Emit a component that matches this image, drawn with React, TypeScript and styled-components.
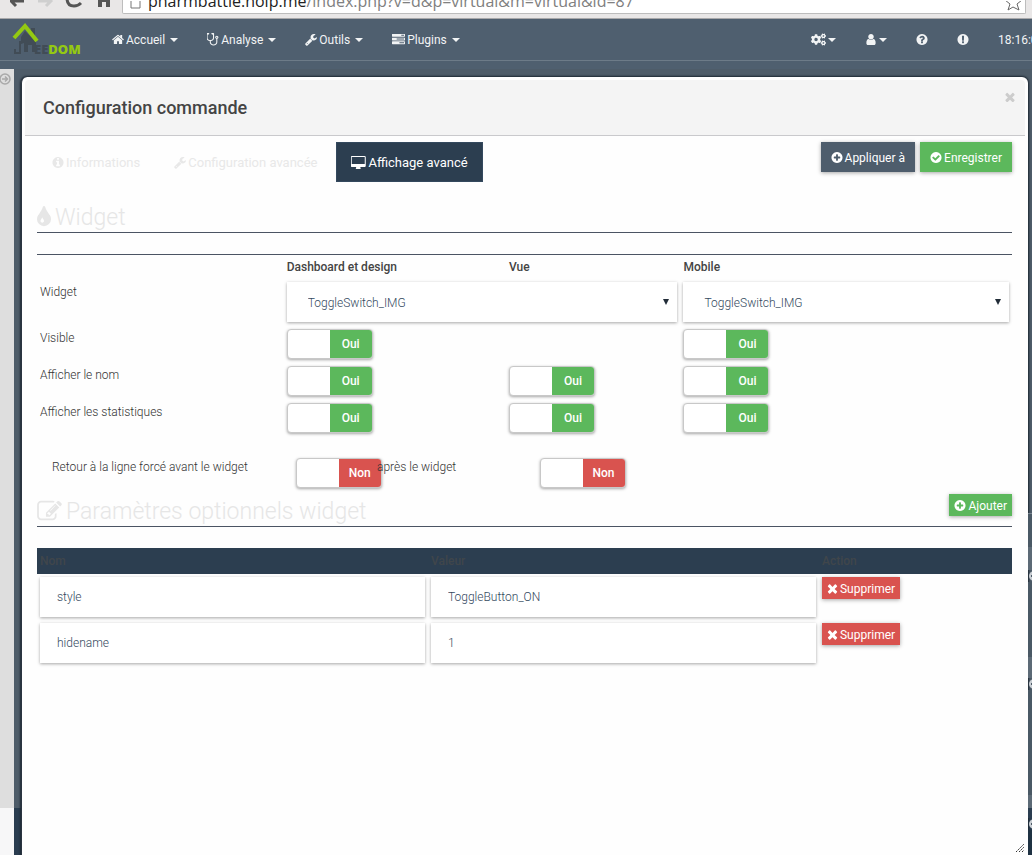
import React, { useState } from "react";
import styled, { createGlobalStyle } from "styled-components";
import { FaCogs } from "react-icons/fa";

const Global = createGlobalStyle`
  *, *::before, *::after { box-sizing: border-box; }
  body { margin: 0; font: 300 12px/20px Roboto, "Liberation Sans", sans-serif; color: #333; background: #f7f7f8; }
  button, input, select { font: inherit; color: inherit; margin: 0; }
`;

/* ---------- icons ---------- */
const DISC =
  "q0 209-103 385.5t-279.5 279.5-385.5 103-385.5-103-279.5-279.5-103-385.5 103-385.5 279.5-279.5 385.5-103 385.5 103 279.5 279.5 103 385.5z";
const ICONS = {
  home: "M1472 992v480q0 26-19 45t-45 19h-384v-384h-256v384h-384q-26 0-45-19t-19-45v-480q0-1 .5-3t.5-3l575-474 575 474q1 2 1 6zm223-69l-62 74q-8 9-21 11h-3q-13 0-21-7l-692-577-692 577q-12 8-24 7-13-2-21-11l-62-74q-8-10-7-23.5t11-21.5l719-599q32-26 76-26t76 26l244 204v-195q0-14 9-23t23-9h192q14 0 23 9t9 23v408l219 182q10 8 11 21.5t-7 23.5z",
  stethoscope:
    "M1344 640q0-26-19-45t-45-19-45 19-19 45 19 45 45 19 45-19 19-45zm128 0q0 62-35.5 111t-92.5 70v395q0 159-131.5 271.5t-316.5 112.5-316.5-112.5-131.5-271.5v-132q-164-20-274-128t-110-252v-512q0-26 19-45t45-19q6 0 16 2 17-30 47-48t65-18q53 0 90.5 37.5t37.5 90.5-37.5 90.5-90.5 37.5q-33 0-64-18v402q0 106 94 181t226 75 226-75 94-181v-402q-31 18-64 18-53 0-90.5-37.5t-37.5-90.5 37.5-90.5 90.5-37.5q35 0 65 18t47 48q10-2 16-2 26 0 45 19t19 45v512q0 144-110 252t-274 128v132q0 106 94 181t226 75 226-75 94-181v-395q-57-21-92.5-70t-35.5-111q0-80 56-136t136-56 136 56 56 136z",
  wrench:
    "M448 1472q0-26-19-45t-45-19-45 19-19 45 19 45 45 19 45-19 19-45zm644-420l-682 682q-37 37-90 37-52 0-91-37l-106-108q-38-36-38-90 0-53 38-91l681-681q39 98 114.5 173.5t173.5 114.5zm634-435q0 39-23 106-47 134-164.5 217.5t-258.5 83.5q-185 0-316.5-131.5t-131.5-316.5 131.5-316.5 316.5-131.5q58 0 121.5 16.5t107.5 46.5q16 11 16 28t-16 28l-293 169v224l193 107q5-3 79-48.5t135.5-81 70.5-35.5q15 0 23.5 10t8.5 25z",
  tasks:
    "M1024 1408h640v-128h-640v128zm-384-512h1024v-128h-1024v128zm640-512h384v-128h-384v128zm512 832v256q0 26-19 45t-45 19h-1664q-26 0-45-19t-19-45v-256q0-26 19-45t45-19h1664q26 0 45 19t19 45zm0-512v256q0 26-19 45t-45 19h-1664q-26 0-45-19t-19-45v-256q0-26 19-45t45-19h1664q26 0 45 19t19 45zm0-512v256q0 26-19 45t-45 19h-1664q-26 0-45-19t-19-45v-256q0-26 19-45t45-19h1664q26 0 45 19t19 45z",
  user: "M1536 1399q0 109-62.5 187t-150.5 78h-854q-88 0-150.5-78t-62.5-187q0-85 8.5-160.5t31.5-152 58.5-131 94-89 134.5-34.5q131 128 313 128t313-128q76 0 134.5 34.5t94 89 58.5 131 31.5 152 8.5 160.5zm-256-887q0 159-112.5 271.5t-271.5 112.5-271.5-112.5-112.5-271.5 112.5-271.5 271.5-112.5 271.5 112.5 112.5 271.5z",
  question:
    "M1024 1376v-192q0-14-9-23t-23-9h-192q-14 0-23 9t-9 23v192q0 14 9 23t23 9h192q14 0 23-9t9-23zm256-672q0-88-55.5-163t-138.5-116-170-41q-243 0-371 213-15 24 8 42l132 100q7 6 19 6 16 0 25-12 53-68 86-92 34-24 86-24 48 0 85.5 26t37.5 59q0 38-20 61t-68 45q-63 28-115.5 86.5t-52.5 125.5v36q0 14 9 23t23 9h192q14 0 23-9t9-23q0-19 21.5-49.5t54.5-49.5q32-18 49-28.5t46-35 44.5-48 28-60.5 12.5-81zm384 192" + DISC,
  exclamation:
    "M896 128q209 0 385.5 103t279.5 279.5 103 385.5-103 385.5-279.5 279.5-385.5 103-385.5-103-279.5-279.5-103-385.5 103-385.5 279.5-279.5 385.5-103zm128 1247v-190q0-14-9-23.5t-22-9.5h-192q-13 0-23 10t-10 23v190q0 13 10 23t23 10h192q13 0 22-9.5t9-23.5zm-2-344l18-621q0-12-10-18-10-8-24-8h-220q-14 0-24 8-10 6-10 18l17 621q0 10 10 17.5t24 7.5h185q14 0 23.5-7.5t10.5-17.5z",
  info: "M1152 1376v-160q0-14-9-23t-23-9h-96v-512q0-14-9-23t-23-9h-320q-14 0-23 9t-9 23v160q0 14 9 23t23 9h96v320h-96q-14 0-23 9t-9 23v160q0 14 9 23t23 9h448q14 0 23-9t9-23zm-128-896v-160q0-14-9-23t-23-9h-192q-14 0-23 9t-9 23v160q0 14 9 23t23 9h192q14 0 23-9t9-23zm640 416" + DISC,
  plus: "M1344 960v-128q0-26-19-45t-45-19h-256v-256q0-26-19-45t-45-19h-128q-26 0-45 19t-19 45v256h-256q-26 0-45 19t-19 45v128q0 26 19 45t45 19h256v256q0 26 19 45t45 19h128q26 0 45-19t19-45v-256h256q26 0 45-19t19-45zm320-64" + DISC,
  check:
    "M1412 734q0-28-18-46l-91-90q-19-19-45-19t-45 19l-408 407-226-226q-19-19-45-19t-45 19l-91 90q-18 18-18 46 0 27 18 45l362 362q19 19 45 19 27 0 46-19l543-543q18-18 18-45zm252 162" + DISC,
  times:
    "M1490 1322q0 40-28 68l-136 136q-28 28-68 28t-68-28l-294-294-294 294q-28 28-68 28t-68-28l-136-136q-28-28-28-68t28-68l294-294-294-294q-28-28-28-68t28-68l136-136q28-28 68-28t68 28l294 294 294-294q28-28 68-28t68 28l136 136q28 28 28 68t-28 68l-294 294 294 294q28 28 28 68z",
  tint: "M896 1152q0-36-20-69-1-1-15.5-22.5t-25.5-38-25-44-21-50.5q-4-16-21-16t-21 16q-7 23-21 50.5t-25 44-25.5 38-15.5 22.5q-20 33-20 69 0 53 37.5 90.5t90.5 37.5 90.5-37.5 37.5-90.5zm512-128q0 212-150 362t-362 150-362-150-150-362q0-145 81-275 6-9 62.5-90.5t101-151 99.5-178 83-201.5q9-30 34-47t51-17 51.5 17 33.5 47q28 93 83 201.5t99.5 178 101 151 62.5 90.5q81 127 81 275z",
  edit: "M888 1184l116-116-152-152-116 116v56h96v96h56zm440-720q-16-16-33 1l-350 350q-17 17-1 33t33-1l350-350q17-17 1-33zm80 594v190q0 119-84.5 203.5t-203.5 84.5h-832q-119 0-203.5-84.5t-84.5-203.5v-832q0-119 84.5-203.5t203.5-84.5h832q63 0 117 25 15 7 18 23 3 17-9 29l-49 49q-14 14-32 8-23-6-45-6h-832q-66 0-113 47t-47 113v832q0 66 47 113t113 47h832q66 0 113-47t47-113v-126q0-13 9-22l64-64q15-15 35-7t20 29zm-96-738l288 288-672 672h-288v-288zm444 132l-92 92-288-288 92-92q28-28 68-28t68 28l152 152q28 28 28 68t-28 68z",
  desktop:
    "M1728 992v-832q0-13-9.5-22.5t-22.5-9.5h-1600q-13 0-22.5 9.5t-9.5 22.5v832q0 13 9.5 22.5t22.5 9.5h1600q13 0 22.5-9.5t9.5-22.5zm128-832v1088q0 66-47 113t-113 47h-544q0 37 16 77.5t32 71 16 43.5q0 26-19 45t-45 19h-512q-26 0-45-19t-19-45q0-14 16-44t32-70 16-78h-544q-66 0-113-47t-47-113v-1088q0-66 47-113t113-47h1600q66 0 113 47t47 113z",
};

type IconProps = { name: keyof typeof ICONS; size?: number; box?: string };
const Icon = ({ name, size = 13, box = "64 0 1664 1792" }: IconProps) => {
  const [, , w, h] = box.split(" ").map(Number);
  return (
    <svg width={Math.round((size * w) / h)} height={size} viewBox={box} fill="currentColor" aria-hidden="true">
      <path d={ICONS[name]} />
    </svg>
  );
};

/* ---------- browser chrome ---------- */
const Page = styled.div`
  min-height: 100vh;
  display: flex;
  flex-direction: column;
  overflow: hidden;
`;
const BrowserBar = styled.div`
  height: 19px;
  display: flex;
  align-items: flex-start;
  padding: 0 6px 0 10px;
  background: #e9e7e7;
  border-bottom: 1px solid #a8a8aa;
  overflow: hidden;
`;
const BrowserIcons = styled.svg`
  flex: none;
  width: 112px;
  height: 14px;
`;
const Address = styled.div`
  flex: 1;
  height: 14px;
  display: flex;
  align-items: flex-end;
  gap: 7px;
  padding: 0 2px 0 7px;
  background: #fff;
  border: 1px solid #bdbdbd;
  border-top: 0;
  border-radius: 0 0 2px 2px;
  font: 400 16px/24px "Open Sans", "Noto Sans", sans-serif;
  color: #808080;
  white-space: nowrap;
  span { flex: 1; }
  b { font-weight: 400; color: #222; }
`;

/* ---------- application nav ---------- */
const Navbar = styled.header`
  background: #4f5f6f;
  padding-bottom: 8px;
`;
const NavRow = styled.nav`
  display: flex;
  align-items: center;
  gap: 29px;
  height: 42px;
  padding-left: 12px;
  border-bottom: 1px solid #6d7b88;
`;
const NavItem = styled.button`
  display: flex;
  align-items: center;
  gap: 2px;
  padding: 0;
  border: 0;
  background: none;
  color: #f2f4f5;
  font-weight: 400;
  white-space: nowrap;
`;
const Caret = styled.span`
  border: 4px solid transparent;
  border-top-color: currentColor;
  border-bottom: 0;
  margin-left: ${(p: { $tight?: boolean }) => (p.$tight ? 0 : 3)}px;
`;
const NavRight = styled.div`
  display: flex;
  align-items: center;
  gap: 29px;
  margin-left: auto;
`;
const Clock = styled.span`
  width: 34px;
  color: #f2f4f5;
  font-weight: 400;
  white-space: nowrap;
`;

/* ---------- body behind the dialog ---------- */
const Body = styled.div`
  flex: 1;
  display: flex;
`;
const Rail = styled.aside`
  width: 14px;
  padding-top: 4px;
  background: linear-gradient(to top, #f7f7f8 47px, #dedede 47px);
  svg { display: block; }
`;
const Backdrop = styled.div`
  flex: 1;
  min-width: 0;
  display: flex;
  padding: 8px 0 0 7px;
  background: linear-gradient(to top, #2a3d50 47px, #4e5c69 47px);
`;
const Behind = styled.div`
  width: 4px;
  display: flex;
  flex-direction: column;
  justify-content: flex-end;
  overflow: hidden;
  svg { display: block; }
`;
const Band = styled.div<{ $h: number; $c: string }>`
  height: ${(p) => p.$h}px;
  background: ${(p) => p.$c};
`;

/* ---------- dialog ---------- */
const Dialog = styled.section`
  flex: 1;
  min-width: 0;
  display: flex;
  flex-direction: column;
  padding: 3px;
  background: #fefefe;
  border-left: 1px solid #2a3440;
  border-radius: 6px 6px 0 0;
  box-shadow: 0 0 2px 1px #1d2833;
`;
const DialogHead = styled.div`
  display: flex;
  justify-content: space-between;
  align-items: flex-start;
  height: 56px;
  padding: 0 10px 0 18px;
  background: #f4f4f4;
  border-bottom: 1px solid #c9c9cc;
  border-radius: 4px 4px 0 0;
`;
const DialogTitle = styled.h1`
  margin: 0;
  font-size: 18px;
  line-height: 56px;
  font-weight: 500;
  color: #444;
`;
const CloseButton = styled.button`
  padding: 12px 0;
  border: 0;
  background: none;
  color: #ccc;
  line-height: 0;
`;
const Content = styled.div`
  flex: 1;
  padding: 6px 13px 0 12px;
`;
const Toolbar = styled.div`
  display: flex;
  justify-content: space-between;
  align-items: flex-start;
`;
const Tabs = styled.div`
  display: flex;
  gap: 4px;
`;
const Tab = styled.button<{ $active?: boolean }>`
  display: flex;
  align-items: center;
  gap: 2px;
  height: 40px;
  padding: 1px 14px 0;
  border: 1px solid ${(p) => (p.$active ? "#34495e" : "transparent")};
  background: ${(p) => (p.$active ? "#2c3e50" : "none")};
  color: ${(p) => (p.$active ? "#fff" : "#e8e8e8")};
  font-size: 13px;
  font-weight: 400;
  white-space: nowrap;
`;
const Actions = styled.div`
  display: flex;
  gap: 5px;
`;
const TONES = { slate: "#4e5d6c", green: "#5cb85c", red: "#d9534f" };
const Button = styled.button<{ $tone: keyof typeof TONES; $small?: boolean }>`
  display: inline-flex;
  align-items: center;
  gap: 2px;
  height: ${(p) => (p.$small ? 22 : 30)}px;
  padding: 1px ${(p) => (p.$small ? 5 : 10)}px 0;
  border: 0;
  background: ${(p) => TONES[p.$tone]};
  color: #fff;
  font-weight: 400;
  white-space: nowrap;
  box-shadow: 0 1px 4px rgba(0, 0, 0, 0.35);
`;
const Legend = styled.div<{ $pull?: boolean }>`
  display: flex;
  justify-content: space-between;
  align-items: flex-start;
  height: 33px;
  margin: ${(p) => (p.$pull ? "4px" : "18px")} 0 21px;
  border-bottom: 1px solid #4b5463;
`;
const LegendTitle = styled.h2`
  display: flex;
  align-items: center;
  gap: 4px;
  margin: 0;
  font-size: 23px;
  line-height: 36px;
  font-weight: 300;
  color: #e6e6e6;
  svg { margin-bottom: 4px; }
`;
const Grid = styled.table`
  width: 100%;
  border-collapse: separate;
  border-spacing: 0;
  table-layout: fixed;
  th, td { padding: 3px; text-align: left; vertical-align: top; }
`;
const OptionsGrid = styled(Grid)`
  border-top: 1px solid #4b5463;
  th { font-weight: 500; height: 24px; padding: 2px 3px; color: #444; }
  td { height: 37px; }
`;
const ParamsGrid = styled(Grid)`
  thead th { height: 25px; background: #2c3e50; color: #40464b; font-weight: 500; }
  td { height: 46px; }
`;
const Field = styled.input`
  display: block;
  width: 100%;
  height: 40px;
  padding: 0 17px;
  border: 0;
  background: #fff;
  color: #34495e;
  box-shadow: 0 1px 3px rgba(0, 0, 0, 0.35);
`;
const SelectBox = styled.div`
  display: grid;
  align-items: center;
  > * { grid-area: 1 / 1; }
  svg { justify-self: end; margin-right: 7px; pointer-events: none; }
`;
const Select = styled(Field).attrs({ as: "select" })`
  appearance: none;
  padding: 2px 21px 0;
  border-radius: 0;
`;
const Switch = styled.label<{ $on: boolean }>`
  display: grid;
  grid-template-columns: 1fr 1fr;
  width: 86px;
  height: 30px;
  margin: 1px 0 0;
  border: 1px solid #c8c8c8;
  border-radius: 4px;
  overflow: hidden;
  background: #fff;
  box-shadow: 0 1px 3px rgba(0, 0, 0, 0.35);
  input { appearance: none; }
  span {
    background: ${(p) => (p.$on ? TONES.green : TONES.red)};
    color: #fff;
    font-weight: 500;
    line-height: 29px;
    text-align: center;
  }
`;
const BreakRow = styled.div`
  display: grid;
  grid-template-columns:
    minmax(0, 3fr) minmax(0, 1fr) minmax(0, 2fr) minmax(0, 1fr) minmax(0, 5fr);
  height: 33px;
  margin-top: 21px;
  > * { margin-left: 15px; white-space: nowrap; }
`;
const BreakLabel = styled.span`
  position: relative;
`;
const Grip = styled.svg`
  align-self: flex-end;
  margin: 0 1px 0 0;
`;

const Toggle = ({ label, initial = true }: { label: string; initial?: boolean }) => {
  const [on, setOn] = useState(initial);
  return (
    <Switch $on={on}>
      <input type="checkbox" aria-label={label} checked={on} onChange={() => setOn(!on)} />
      <span>{on ? "Oui" : "Non"}</span>
    </Switch>
  );
};

const WidgetSelect = ({ label }: { label: string }) => (
  <SelectBox>
    <Select aria-label={label}>
      <option>ToggleSwitch_IMG</option>
    </Select>
    <svg width="8" height="8" viewBox="0 0 8 8" aria-hidden="true">
      <path d="M1 1h6L4 7z" fill="#222d38" />
    </svg>
  </SelectBox>
);

const Peek = () => (
  <svg width="10" height="12" viewBox="0 0 10 12" aria-hidden="true">
    <circle cx="6" cy="6" r="5" fill="#c9ced3" />
    <path d="M3 6h6" stroke="#4e5c69" strokeWidth="2" />
  </svg>
);

const Logo = () => (
  <svg width="71" height="36" viewBox="0 0 71 36" role="img" aria-label="Jeedom">
    <path d="M19 6h4v9l-4-4z" fill="#414c56" />
    <path d="M9 15l4-6 11 11v10h-4v-7h-4v7h-4v-9l-3 1z" fill="#414c56" />
    <path d="M3 27v4h5V19" fill="none" stroke="#414c56" strokeWidth="2" />
    <path d="M2 16L13 4l12 15" fill="none" stroke="#94c912" strokeWidth="4" />
    <text x="22" y="32" fontFamily="Open Sans, sans-serif" fontWeight="800" fontSize="13" fill="#414c56">
      EE<tspan fill="#94c912">DOM</tspan>
    </text>
  </svg>
);

const ROWS = [
  { label: "Visible", vue: false },
  { label: "Afficher le nom", vue: true },
  { label: "Afficher les statistiques", vue: true },
];
const PARAMS = [
  { name: "style", value: "ToggleButton_ON" },
  { name: "hidename", value: "1" },
];

export default function App() {
  return (
    <Page>
      <Global />
      <BrowserBar>
        <BrowserIcons viewBox="0 0 112 14" fill="none" strokeWidth="3" aria-hidden="true">
          <path d="M14 1H1M6 6L0 0" stroke="#555" />
          <path d="M28 1h13M36 6l6-6" stroke="#cfcfcf" />
          <path d="M57-2q0 8 7 8 4 0 7-3" stroke="#555" />
          <path d="M88 0v7h4V2h4v5h4V0z" fill="#555" />
        </BrowserIcons>
        <Address>
          <svg width="11" height="12" viewBox="0 0 11 12" aria-hidden="true">
            <path d="M1-3v10h9V-3" fill="#fff" stroke="#777" />
          </svg>
          <span><b>pharmbattle.noip.me</b>/index.php?v=d&amp;p=virtual&amp;m=virtual&amp;id=87</span>
          <svg width="19" height="12" viewBox="0 0 19 12" aria-hidden="true">
            <path d="M1 -1l5 4-2 6 5-3 6 3-2-6 5-4" fill="none" stroke="#666" />
          </svg>
        </Address>
      </BrowserBar>

      <Navbar>
        <NavRow>
          <Logo />
          <NavItem><Icon name="home" />Accueil<Caret /></NavItem>
          <NavItem><Icon name="stethoscope" box="128 128 1408 1536" />Analyse<Caret /></NavItem>
          <NavItem><Icon name="wrench" />Outils<Caret /></NavItem>
          <NavItem><Icon name="tasks" box="0 0 1792 1792" />Plugins<Caret /></NavItem>
          <NavRight>
            <NavItem aria-label="Configuration"><FaCogs size={15} /><Caret $tight /></NavItem>
            <NavItem aria-label="Utilisateur"><Icon name="user" /><Caret $tight /></NavItem>
            <NavItem aria-label="Aide"><Icon name="question" /></NavItem>
            <NavItem aria-label="Alertes"><Icon name="exclamation" /></NavItem>
            <Clock>18:16:0</Clock>
          </NavRight>
        </NavRow>
      </Navbar>

      <Body>
        <Rail>
          <svg width="12" height="12" viewBox="0 0 12 12" fill="none" stroke="#a9a9a9" aria-hidden="true">
            <circle cx="5" cy="6" r="5" strokeWidth="1.5" />
            <path d="M2 6h5M5 3.5L7.5 6 5 8.500" strokeWidth="1.5" />
          </svg>
        </Rail>
        <Backdrop>
          <Dialog aria-labelledby="dialog-title">
            <DialogHead>
              <DialogTitle id="dialog-title">Configuration commande</DialogTitle>
              <CloseButton aria-label="Fermer"><Icon name="times" box="256 256 1280 1280" size={10} /></CloseButton>
            </DialogHead>
            <Content>
              <Toolbar>
                <Tabs role="tablist">
                  <Tab role="tab"><Icon name="info" />Informations</Tab>
                  <Tab role="tab"><Icon name="wrench" />Configuration avancée</Tab>
                  <Tab role="tab" aria-selected="true" $active>
                    <Icon name="desktop" box="0 0 1856 1664" />Affichage avancé
                  </Tab>
                </Tabs>
                <Actions>
                  <Button $tone="slate"><Icon name="plus" />Appliquer à</Button>
                  <Button $tone="green"><Icon name="check" />Enregistrer</Button>
                </Actions>
              </Toolbar>

              <Legend>
                <LegendTitle><Icon name="tint" size={23} box="384 0 1024 1664" />Widget</LegendTitle>
              </Legend>
              <OptionsGrid>
                <colgroup>
                  <col style={{ width: "25.300%" }} />
                  <col style={{ width: "22.800%" }} />
                  <col style={{ width: "17.900%" }} />
                  <col />
                </colgroup>
                <thead>
                  <tr><th /><th>Dashboard et design</th><th>Vue</th><th>Mobile</th></tr>
                </thead>
                <tbody>
                  <tr>
                    <td>Widget</td>
                    <td colSpan={2}><WidgetSelect label="Widget dashboard et vue" /></td>
                    <td><WidgetSelect label="Widget mobile" /></td>
                  </tr>
                  {ROWS.map((r) => (
                    <tr key={r.label}>
                      <td>{r.label}</td>
                      <td><Toggle label={`${r.label} dashboard`} /></td>
                      <td>{r.vue && <Toggle label={`${r.label} vue`} />}</td>
                      <td><Toggle label={`${r.label} mobile`} /></td>
                    </tr>
                  ))}
                </tbody>
              </OptionsGrid>

              <BreakRow>
                <BreakLabel>Retour à la ligne forcé avant le widget</BreakLabel>
                <Toggle label="Retour à la ligne avant le widget" initial={false} />
                <BreakLabel>après le widget</BreakLabel>
                <Toggle label="Retour à la ligne après le widget" initial={false} />
              </BreakRow>

              <Legend $pull>
                <LegendTitle><Icon name="edit" size={23} box="0 0 1792 1664" />Paramètres optionnels widget</LegendTitle>
                <Button $tone="green" $small><Icon name="plus" />Ajouter</Button>
              </Legend>
              <ParamsGrid>
                <colgroup>
                  <col style={{ width: "40.100%" }} />
                  <col style={{ width: "40.100%" }} />
                  <col />
                </colgroup>
                <thead>
                  <tr><th>Nom</th><th>Valeur</th><th>Action</th></tr>
                </thead>
                <tbody>
                  {PARAMS.map((p) => (
                    <tr key={p.name}>
                      <td><Field aria-label="Nom" defaultValue={p.name} /></td>
                      <td><Field aria-label="Valeur" defaultValue={p.value} /></td>
                      <td>
                        <Button $tone="red" $small>
                          <Icon name="times" box="192 192 1408 1408" size={11} />Supprimer
                        </Button>
                      </td>
                    </tr>
                  ))}
                </tbody>
              </ParamsGrid>
            </Content>
            <Grip width="8" height="8" viewBox="0 0 8 8" stroke="#333" aria-hidden="true">
              <path d="M0 8L8 0M3 8l5-5M6 8l2-2" strokeDasharray="2 1" />
            </Grip>
          </Dialog>
          <Behind aria-hidden="true">
            <Band $h={1} $c="#7a8691" />
            <Band $h={33} $c="#4a5965" />
            <Band $h={23} $c="#5c6a76" />
            <Peek />
            <Band $h={75} $c="#4a5965" />
            <Band $h={21} $c="#5c6a76" />
            <Peek />
            <Band $h={105} $c="#4a5965" />
            <Band $h={13} $c="#5c6a76" />
            <Band $h={10} $c="#2a3d50" />
            <Peek />
            <Band $h={25} $c="#1f3243" />
          </Behind>
        </Backdrop>
      </Body>
    </Page>
  );
}
